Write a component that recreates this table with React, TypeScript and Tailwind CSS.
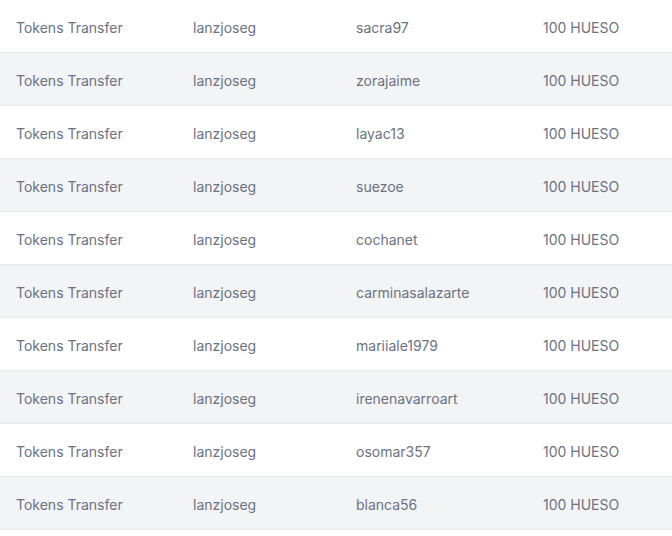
import React from "react";

const names = [
  "sacra97",
  "zorajaime",
  "layac13",
  "suezoe",
  "cochanet",
  "carminasalazarte",
  "mariiale1979",
  "irenenavarroart",
  "osomar357",
  "blanca56",
];

export default function App() {
  return (
    <div className="w-[672px] h-[536px] bg-white overflow-hidden" style={{ fontFamily: "Inter, 'Liberation Sans', sans-serif" }}>
      {names.map((n, i) => (
        <div
          key={n}
          className={`grid grid-cols-[177px_163px_187px_1fr] h-[53px] pt-[3px] items-center border-b border-gray-200 text-sm text-gray-500 ${i % 2 === 1 ? "bg-gray-100" : "bg-white"}`}
        >
          <div className="px-4 whitespace-nowrap">Tokens Transfer</div>
          <div className="px-4 whitespace-nowrap">lanzjoseg</div>
          <div className="px-4 whitespace-nowrap">{n}</div>
          <div className="px-4 whitespace-nowrap">100 HUESO</div>
        </div>
      ))}
    </div>
  );
}
